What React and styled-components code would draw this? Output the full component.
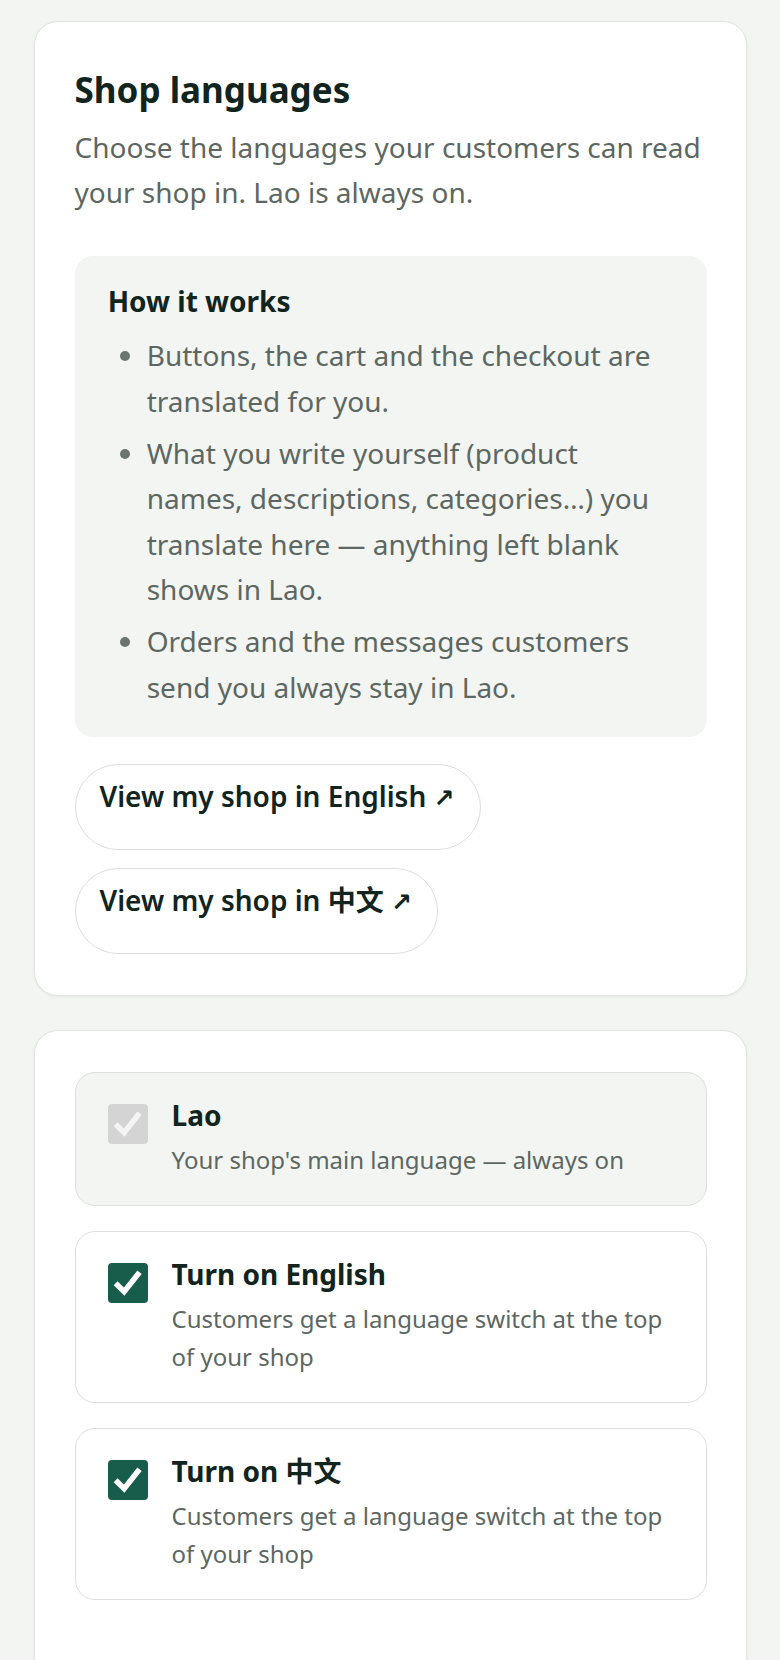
import React, { useState } from "react";
import styled, { createGlobalStyle } from "styled-components";

const GlobalStyle = createGlobalStyle`
  html, body {
    margin: 0;
    padding: 0;
    background: #f3f5f2;
  }
  body {
    font-family: "Noto Sans", "Noto Sans CJK SC", sans-serif;
    color: #13251e;
    -webkit-font-smoothing: antialiased;
  }
  * { box-sizing: border-box; }
`;

const Page = styled.div`
  display: flex;
  flex-direction: column;
  gap: 34px;
  padding: 21px 33px 0 34px;
`;

const Card = styled.section`
  background: #fff;
  border: 1.5px solid #e1e4e0;
  border-radius: 24px;
  box-shadow: 0 1px 3px rgba(20, 40, 30, 0.06);
  padding: ${(p) => (p.$tall ? "41px 39.5px 90px" : "40px 39.5px 41px")};
`;

const Title = styled.h2`
  margin: 0 0 8px;
  font-size: 35px;
  line-height: 55px;
  font-weight: 700;
  color: #11241d;
`;

const Lead = styled.p`
  margin: 0;
  font-size: 28px;
  line-height: 45.2px;
  color: #5d6762;
`;

const InfoBox = styled.div`
  margin-top: 41px;
  background: #f3f5f2;
  border-radius: 18px;
  padding: 26.6px 33.2px;
`;

const InfoHeading = styled.h3`
  margin: 0 0 13px;
  font-size: 28px;
  line-height: 37px;
  font-weight: 700;
  color: #11241d;
`;

const List = styled.ul`
  margin: 0;
  padding-left: 39px;
  color: #5d6762;
  font-size: 28px;
  line-height: 45.5px;
`;

const Item = styled.li`
  & + & { margin-top: 6.6px; }
  &::marker { color: #6b7570; }
`;

const Links = styled.div`
  margin-top: 27px;
  display: flex;
  flex-direction: column;
  align-items: flex-start;
  gap: 18px;
`;

const LinkButton = styled.a`
  display: inline-block;
  min-height: 86px;
  padding: 12px 25px 0 24px;
  border: 1.5px solid #dcdfdc;
  border-radius: 999px;
  background: #fff;
  color: #11241d;
  font-size: 28px;
  font-weight: 600;
  line-height: 38px;
  text-decoration: none;
  cursor: pointer;
`;

const Arrow = styled.span`
  font-family: "DejaVu Sans", sans-serif;
  font-weight: 700;
  font-size: 25px;
`;

const Options = styled.div`
  display: flex;
  flex-direction: column;
  gap: 25px;
`;

const Option = styled.label`
  display: flex;
  align-items: flex-start;
  gap: 24px;
  padding: 24px 32px 26px;
  border: 1.5px solid #dcdfdc;
  border-radius: 20px;
  background: ${(p) => (p.$locked ? "#f3f5f2" : "#fff")};
  cursor: ${(p) => (p.$locked ? "default" : "pointer")};
`;

const Box = styled.span`
  flex: none;
  width: 40px;
  height: 40px;
  margin-top: 7.5px;
  border-radius: 4px;
  display: flex;
  align-items: center;
  justify-content: center;
  background: ${(p) => (p.$locked ? "#d4d4d4" : p.$on ? "#185d4b" : "#fff")};
  border: ${(p) => (p.$on || p.$locked ? "none" : "2px solid #b9bfbb")};
  svg { opacity: ${(p) => (p.$locked ? 0.75 : 1)}; }
`;

const OptionText = styled.span`
  display: flex;
  flex-direction: column;
  gap: 7px;
`;

const OptionTitle = styled.span`
  font-size: 28px;
  line-height: 37px;
  font-weight: 700;
  color: #11241d;
`;

const OptionDesc = styled.span`
  font-size: 24px;
  line-height: 38px;
  color: #5d6762;
`;

const Check = () => (
  <svg width="40" height="40" viewBox="0 0 24 24" fill="none">
    <path d="M4.6 12.2 L9.7 17.2 L18.9 5.6" stroke="#fff" strokeWidth="3.3" strokeLinejoin="miter" />
  </svg>
);

const Checkbox = ({ on, locked }) => (
  <Box $on={on} $locked={locked}>{(on || locked) && <Check />}</Box>
);

export default function App() {
  const [langs, setLangs] = useState({ en: true, zh: true });
  const toggle = (k) => setLangs((s) => ({ ...s, [k]: !s[k] }));

  return (
    <>
      <GlobalStyle />
      <Page>
        <Card>
          <Title>Shop languages</Title>
          <Lead>Choose the languages your customers can read your shop in. Lao is always on.</Lead>
          <InfoBox>
            <InfoHeading>How it works</InfoHeading>
            <List>
              <Item>Buttons, the cart and the checkout are translated for you.</Item>
              <Item>
                What you write yourself (product names, descriptions, categories…) you translate here — anything left blank shows in Lao.
              </Item>
              <Item>Orders and the messages customers send you always stay in Lao.</Item>
            </List>
          </InfoBox>
          <Links>
            <LinkButton>View my shop in English <Arrow>↗</Arrow></LinkButton>
            <LinkButton>View my shop in 中文 <Arrow>↗</Arrow></LinkButton>
          </Links>
        </Card>

        <Card $tall>
          <Options>
            <Option $locked>
              <Checkbox locked />
              <OptionText>
                <OptionTitle>Lao</OptionTitle>
                <OptionDesc>Your shop's main language — always on</OptionDesc>
              </OptionText>
            </Option>
            <Option onClick={() => toggle("en")}>
              <Checkbox on={langs.en} />
              <OptionText>
                <OptionTitle>Turn on English</OptionTitle>
                <OptionDesc>Customers get a language switch at the top of your shop</OptionDesc>
              </OptionText>
            </Option>
            <Option onClick={() => toggle("zh")}>
              <Checkbox on={langs.zh} />
              <OptionText>
                <OptionTitle>Turn on 中文</OptionTitle>
                <OptionDesc>Customers get a language switch at the top of your shop</OptionDesc>
              </OptionText>
            </Option>
          </Options>
        </Card>
      </Page>
    </>
  );
}
